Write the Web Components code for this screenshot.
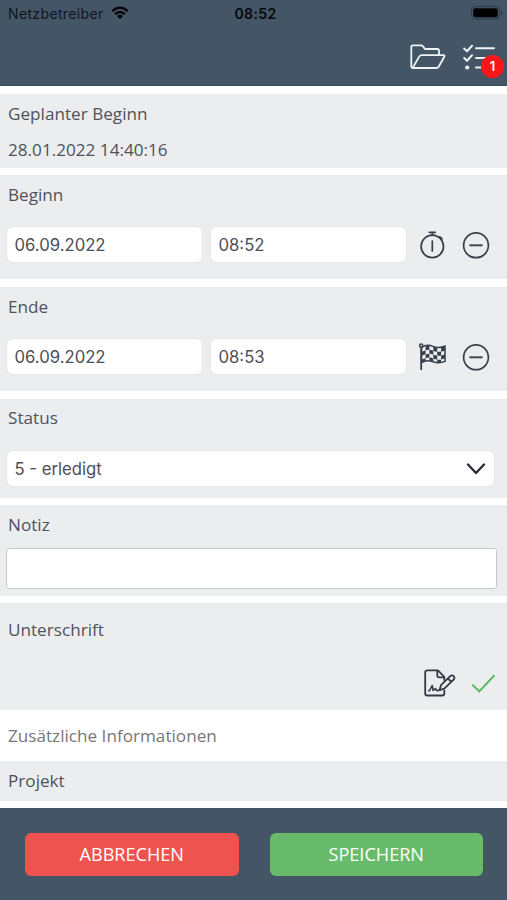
<!DOCTYPE html>
<html lang="de">
<head>
<meta charset="utf-8">
<title>Auftrag</title>
<style>
html, body { margin: 0; height: 100%; }
body { background: #fff; overflow: hidden; font-family: "Open Sans", "Noto Sans", sans-serif; color: #4c525d; }
</style>
</head>
<body>
<order-screen></order-screen>
<script>
const define = (name, html) => {
  const t = document.createElement('template');
  t.innerHTML = html;
  customElements.define(name, class extends HTMLElement {
    constructor() {
      super();
      this.attachShadow({ mode: 'open' }).append(t.content.cloneNode(true));
    }
  });
};

/* Icons: width, height and body of each, stroked in the current colour */
const icons = {
  wifi: [18, 14, '<g fill="none" stroke="currentColor" stroke-width="2.3"><path d="M1.2 5.2Q9-2 16.8 5.2"/><path d="M4 8.2Q9 3.7 14 8.2"/></g><path fill="currentColor" d="M6 10.1Q9 7.6 12 10.1L9 13Z"/>'],
  battery: [32, 14, '<rect x=".6" y=".6" width="27.8" height="12.3" rx="3.6" fill="none" stroke="#2d3947" stroke-width="1"/><rect x="2.3" y="2.3" width="24.4" height="9" rx="2" fill="#000"/><path d="M30 4.8q1.6.5 1.6 2t-1.6 2z" fill="#2d3947"/>'],
  folder: [36, 26, '<g fill="none" stroke="currentColor" stroke-width="1.8" stroke-linejoin="round"><path d="M2.6 24Q1.3 24 1.3 22.5V3Q1.3 1.3 3 1.3H11.2Q12.2 1.3 13 2.4L15 5H27.2Q29 5 29 6.8V11"/><path d="M2.6 24L9.2 12.6Q10 11.2 11.6 11.2H33.2Q35.2 11.2 34.2 13L28.8 22.5Q28 24 26.4 24Z"/></g>'],
  tasks: [32, 27, '<g fill="none" stroke="currentColor" stroke-width="2" stroke-linecap="round" stroke-linejoin="round"><path d="M1.2 4.5L4 7.2L9 1.8M1.2 14L4 16.7L9 11.3"/><path d="M13 4.3H31M13 13.9H31M13 23.5H31"/></g><circle cx="4.2" cy="23.5" r="2.1" fill="currentColor"/>'],
  watch: [26, 28, '<g fill="none" stroke="currentColor" stroke-width="1.7"><circle cx="12.3" cy="15.4" r="11.2"/><path d="M12.3 10v10M9.3 1.3h6M12.3 1.3v3M19.9 5.9l2.2 2" stroke-linecap="round"/></g>'],
  minus: [28, 28, '<g fill="none" stroke="currentColor" stroke-width="1.7"><circle cx="14" cy="14.3" r="12.4"/><path d="M7.4 14.3h13.2" stroke-width="1.9"/></g>'],
  flag: [30, 28, '<g fill="none" stroke="currentColor" stroke-width="1.5"><circle cx="3.2" cy="2.7" r="1.6"/><path d="M3.2 4.4V27" stroke-width="1.8"/><path d="M3.5 4.3Q9 .8 15 3.4Q20.8 5.5 27 3.2V18.4Q21 21 15 18.7Q9 16.2 3.5 19.6Z"/></g><g fill="currentColor"><path d="M7.6 3.3Q9.4 2.6 11.4 2.8V6.8Q9.5 6.6 7.6 7.3ZM15.3 3.6Q17 4.5 19.2 4.7V8.7Q17.2 8.5 15.3 7.7ZM23.1 4.5Q25.2 4.2 27 3.5V7.4Q25.2 8.2 23.1 8.6Z"/><path d="M3.7 9L7.6 7.3V11.3L3.7 12.6ZM11.4 6.8Q13.4 6.9 15.3 7.7V11.8Q13.3 10.8 11.4 10.7ZM19.2 8.7Q21.2 8.9 23.1 8.6V12.5Q21.1 12.9 19.2 12.6Z"/><path d="M7.6 11.3Q9.5 10.7 11.4 10.7V14.6Q9.5 14.5 7.6 15.2ZM15.3 11.8Q17.2 12.5 19.2 12.6V16.5Q17.2 16.4 15.3 15.6ZM23.1 12.5L27 11.4V15.2L23.1 16.4Z"/><path d="M3.7 16.5L7.6 15.2V17.8L3.7 19.2ZM11.4 14.6Q13.4 14.8 15.3 15.6V18.8Q13.4 17.8 11.4 17.5ZM19.2 16.5Q21.2 16.8 23.1 16.4V19.5Q21.2 19.8 19.2 19.6Z"/></g>'],
  chevron: [20, 12, '<path d="M2 1.5L10 10L18 1.5" fill="none" stroke="currentColor" stroke-width="2.4" stroke-linecap="round" stroke-linejoin="round"/>'],
  sign: [32, 28, '<g fill="none" stroke="currentColor" stroke-width="1.8" stroke-linejoin="round" stroke-linecap="round"><path d="M20.3 11V7.8L14 1.3H3.2Q1.2 1.3 1.2 3.3V24.5Q1.2 26.5 3.2 26.5H18.3Q20.3 26.5 20.3 24.5V21.5"/><path d="M13.3 1.8V6.5Q13.3 8.4 15.2 8.4H20"/><path d="M15.5 21.2L17 16.2L26.2 7.2Q28 5.6 29.7 7.2Q31.3 8.9 29.6 10.6L20.3 19.6ZM24 9.5L27.3 12.8"/><path d="M4.8 22L6 20.7L8.2 16.5L9.2 21.5L11.5 19.6L12.8 21.6L15.5 21.2" stroke-width="1.6"/></g>'],
  check: [25, 19, '<path d="M1.3 10.6L8.3 17.4L23.5 1.3" fill="none" stroke="currentColor" stroke-width="2"/>']
};
customElements.define('ui-icon', class extends HTMLElement {
  constructor() { super(); this.attachShadow({ mode: 'open' }); }
  connectedCallback() {
    const [w, h, body] = icons[this.getAttribute('name')];
    this.shadowRoot.innerHTML = `<style>:host{display:block;flex:none;width:${w}px;height:${h}px}svg{display:block}</style><svg width="${w}" height="${h}" viewBox="0 0 ${w} ${h}">${body}</svg>`;
  }
});

define('status-bar', `<style>
:host{display:grid;grid-template-columns:1fr auto 1fr;align-items:center;height:28px;padding:0 4px 0 8px;box-sizing:border-box;color:#10161d;font:14px/28px Inter,sans-serif}
.l{display:flex;align-items:center;gap:7px;letter-spacing:.36px}
.t{font-weight:600;color:#05080b;letter-spacing:.35px;font-size:14px}
.r{justify-self:end} ui-icon{color:#000;position:relative;top:-1px}
</style><div class="l"><span>Netzbetreiber</span><ui-icon name="wifi"></ui-icon></div><span class="t">08:52</span><ui-icon class="r" name="battery"></ui-icon>`);

define('count-badge', `<style>
:host{position:absolute;left:18px;top:11px;width:23px;height:23px;border-radius:50%;background:#fb1719;color:#fff;font:600 13px/23px Inter,sans-serif;text-align:center}
</style><slot></slot>`);

define('app-header', `<style>
:host{display:block;height:86px;background:#445566;color:#fff;box-sizing:border-box;border-bottom:1px solid #394958}
nav{display:flex;justify-content:flex-end;align-items:flex-start;gap:17px;padding:16px 12px 0 0;color:#eef3f8}
.task{position:relative}
</style><status-bar></status-bar><nav><ui-icon name="folder"></ui-icon><div class="task"><ui-icon name="tasks"></ui-icon><count-badge>1</count-badge></div></nav>`);

define('form-section', `<style>
:host{display:block;flex:none;box-sizing:border-box;background:#ecedef;padding:0 6px}
h2{margin:0 0 0 2px;font-size:17.15px;line-height:24px;font-weight:400}
</style><h2><slot name="label"></slot></h2><slot></slot>`);

define('text-field', `<style>
:host{display:flex;align-items:center;justify-content:space-between;box-sizing:border-box;height:37px;background:#fff;border:1px solid #e3e5e7;border-radius:7px;padding:0 8px 0 7.5px;font:16.7px/24px Inter,sans-serif;color:#4b4f58}
:host([plain]){border:1px solid #c6c8ca;border-radius:3px;height:41px}
ui-icon{color:#252b37}
</style><slot></slot>`);

define('time-row', `<style>
:host{display:grid;grid-template-columns:197px 197px 27px 28px;column-gap:7px;align-items:center;color:#36404c}
ui-icon,::slotted(ui-icon){justify-self:center;position:relative}
::slotted(ui-icon){left:5px}
ui-icon{left:14px}
</style><slot></slot><ui-icon name="minus"></ui-icon>`);

define('action-button', `<style>
:host{flex:1;height:43px;border-radius:6px;color:#fff;font-size:18.1px;line-height:43px;text-align:center;background:var(--tone)}
</style><slot></slot>`);

define('order-screen', `<style>
:host{display:flex;flex-direction:column;height:900px;width:507px}
main{display:flex;flex-direction:column;height:722px;flex:none;padding-top:8px;box-sizing:border-box}
.planned{height:74px;padding-top:8px;margin-bottom:7px}
.planned p{margin:12px 2px 0;font-size:17.15px;line-height:24px}
.begin{height:104px;padding-top:8px;margin-bottom:8px}
.end{height:104px;padding-top:8px;margin-bottom:8px}
.begin time-row,.end time-row{margin-top:19px}
.state{height:99px;padding-top:7px;margin-bottom:7px}
.state text-field{margin:20px 6px 0 0}
.note{height:91px;padding-top:8px;margin-bottom:7px}
.note text-field{margin:11px 4px 0 0}
.sign{height:107px;padding-top:15px}
.icons{display:flex;justify-content:flex-end;align-items:center;gap:15px;margin:27px 5px 0 0;color:#323a47}
.icons .ok{color:#58b960}
.more{height:51px;padding:14px 8px 0;box-sizing:border-box;color:#777;font-size:17.15px;line-height:24px}
.project{height:40px;padding-top:8px}
footer{display:flex;height:92px;flex:none;box-sizing:border-box;background:#445566;padding:25px 24px 0 25px;gap:31px}
</style>
<app-header></app-header>
<main>
<form-section class="planned"><span slot="label">Geplanter Beginn</span><p>28.01.2022 14:40:16</p></form-section>
<form-section class="begin"><span slot="label">Beginn</span><time-row><text-field>06.09.2022</text-field><text-field>08:52</text-field><ui-icon name="watch"></ui-icon></time-row></form-section>
<form-section class="end"><span slot="label">Ende</span><time-row><text-field>06.09.2022</text-field><text-field>08:53</text-field><ui-icon name="flag"></ui-icon></time-row></form-section>
<form-section class="state"><span slot="label">Status</span><text-field>5 - erledigt<ui-icon name="chevron" style="color:#252b37"></ui-icon></text-field></form-section>
<form-section class="note"><span slot="label">Notiz</span><text-field plain></text-field></form-section>
<form-section class="sign"><span slot="label">Unterschrift</span><div class="icons"><ui-icon name="sign"></ui-icon><ui-icon class="ok" name="check"></ui-icon></div></form-section>
<div class="more">Zusätzliche Informationen</div>
<form-section class="project"><span slot="label">Projekt</span></form-section>
</main>
<footer><action-button style="--tone:#ef5350">ABBRECHEN</action-button><action-button style="--tone:#67bb6a">SPEICHERN</action-button></footer>`);
</script>
</body>
</html>
